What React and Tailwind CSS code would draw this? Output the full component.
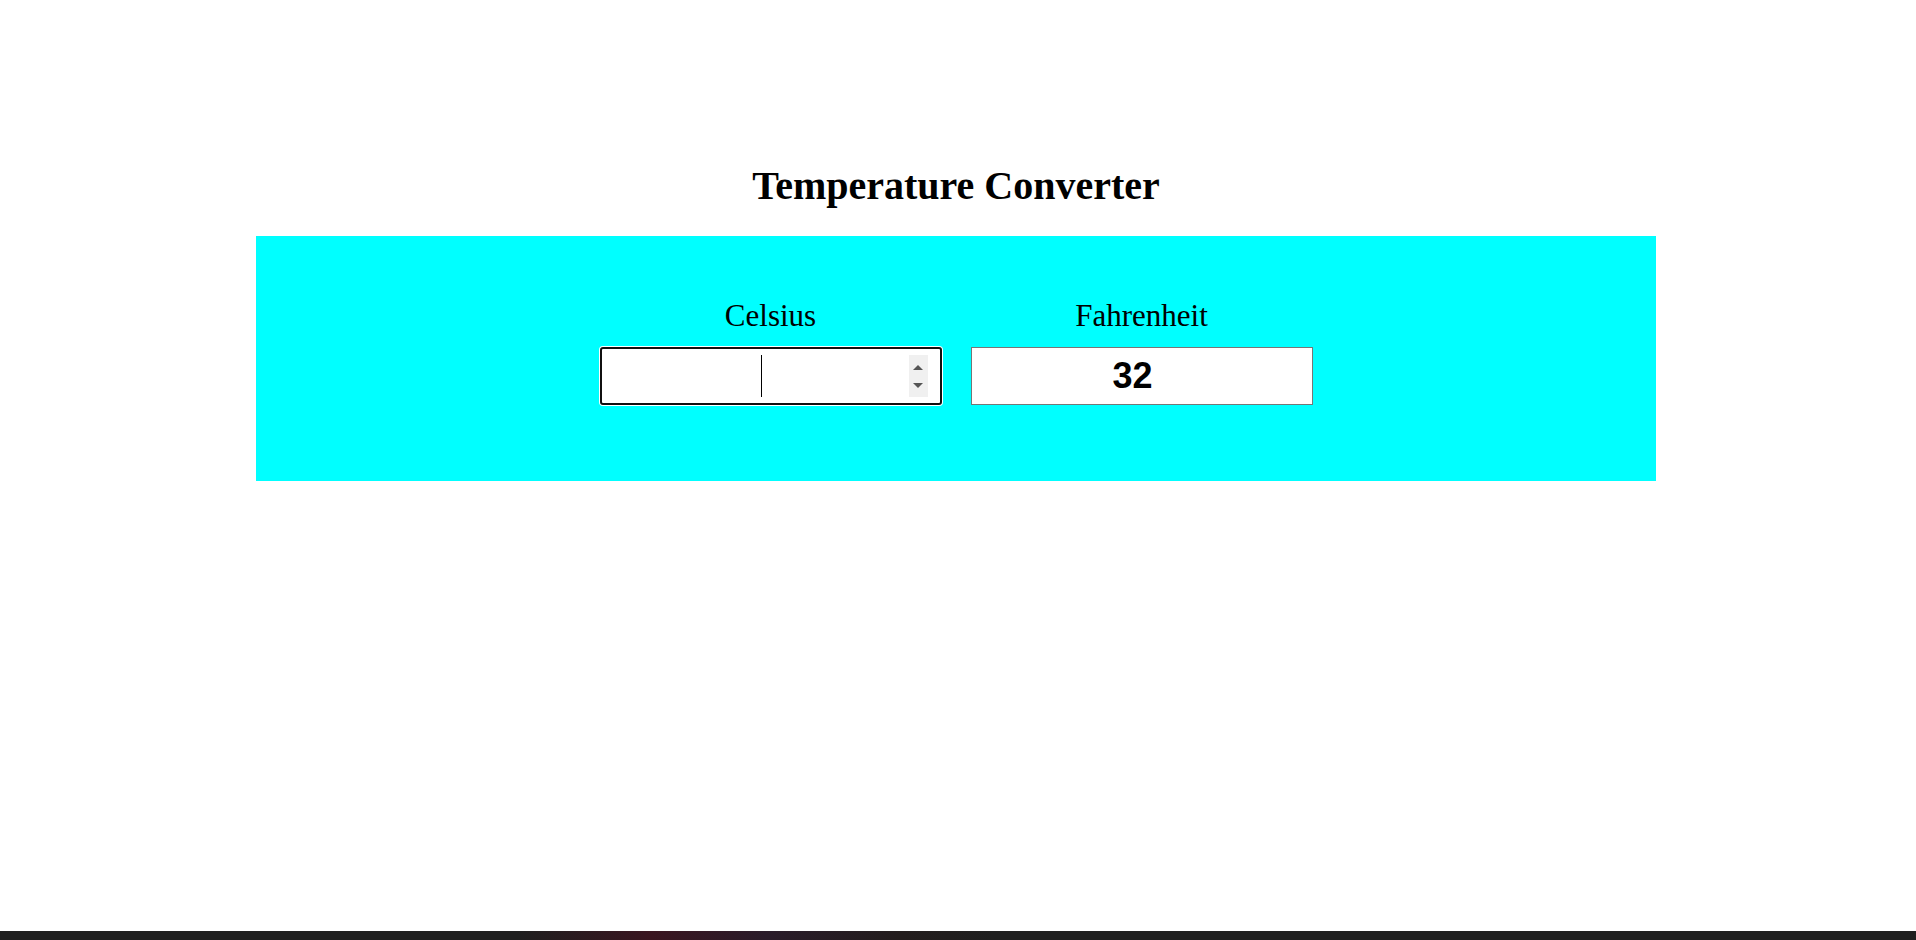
import React, { useState } from 'react';

const noSpin =
  '[appearance:textfield] [&::-webkit-inner-spin-button]:appearance-none [&::-webkit-outer-spin-button]:appearance-none';

export default function App() {
  const [celsius, setCelsius] = useState('');
  const fahrenheit = celsius === '' ? 32 : Math.round((parseFloat(celsius) * 9) / 5 + 32);

  return (
    <div className="min-h-[940px] flex flex-col bg-white font-['Liberation_Serif',serif] text-black">
      <div className="flex-1 w-[1912px]">
        {/* TITLE */}
        <h1 className="pt-[164px] text-center text-[40px] leading-[44px] font-bold">Temperature Converter</h1>

        {/* CONVERTER */}
        <div className="mt-[28px] mx-auto w-[1400px] h-[245px] bg-[#00ffff] pt-[63px]">
          <div className="flex justify-center gap-[29px]">
            <div className="w-[342px] flex flex-col items-center">
              <label className="text-[31px] leading-[34px] mb-[14px]">Celsius</label>
              <div className="relative">
                <input
                  type="number"
                  autoFocus
                  value={celsius}
                  onChange={(e) => setCelsius(e.target.value)}
                  className={`w-[342px] h-[58px] pl-[12px] pr-[33px] bg-white border-2 border-[#101010] rounded-[3px] shadow-[0_0_0_1px_#ffffff] outline-none text-center font-['Liberation_Sans',Arial,sans-serif] font-bold text-[36px] caret-transparent ${noSpin}`}
                />
                {/* caret */}
                <div className="absolute left-[161px] top-[8px] w-px h-[42px] bg-black pointer-events-none" />
                {/* spinner */}
                <div className="absolute right-[14px] top-[8px] w-[19px] h-[42px] bg-[#f0f0f0] flex flex-col items-center justify-center gap-[13px] pointer-events-none">
                  <svg width="10" height="5" viewBox="0 0 10 5"><path d="M5 0L10 5H0z" fill="#555" /></svg>
                  <svg width="10" height="5" viewBox="0 0 10 5"><path d="M0 0h10L5 5z" fill="#555" /></svg>
                </div>
              </div>
            </div>
            <div className="w-[342px] flex flex-col items-center">
              <label className="text-[31px] leading-[34px] mb-[14px]">Fahrenheit</label>
              <input
                type="number"
                readOnly
                value={fahrenheit}
                className={`w-[342px] h-[58px] pl-[12px] pr-[30px] bg-white border border-[#767676] outline-none text-center font-['Liberation_Sans',Arial,sans-serif] font-bold text-[36px] ${noSpin}`}
              />
            </div>
          </div>
        </div>
      </div>

      {/* taskbar strip */}
      <div className="h-[9px] bg-[linear-gradient(90deg,#1f1f1f_0%,#1f1f1f_27%,#3a1520_34%,#2a1c2a_40%,#231d1d_47%,#1f1f1f_52%,#1f1f1f_100%)]" />
    </div>
  );
}
